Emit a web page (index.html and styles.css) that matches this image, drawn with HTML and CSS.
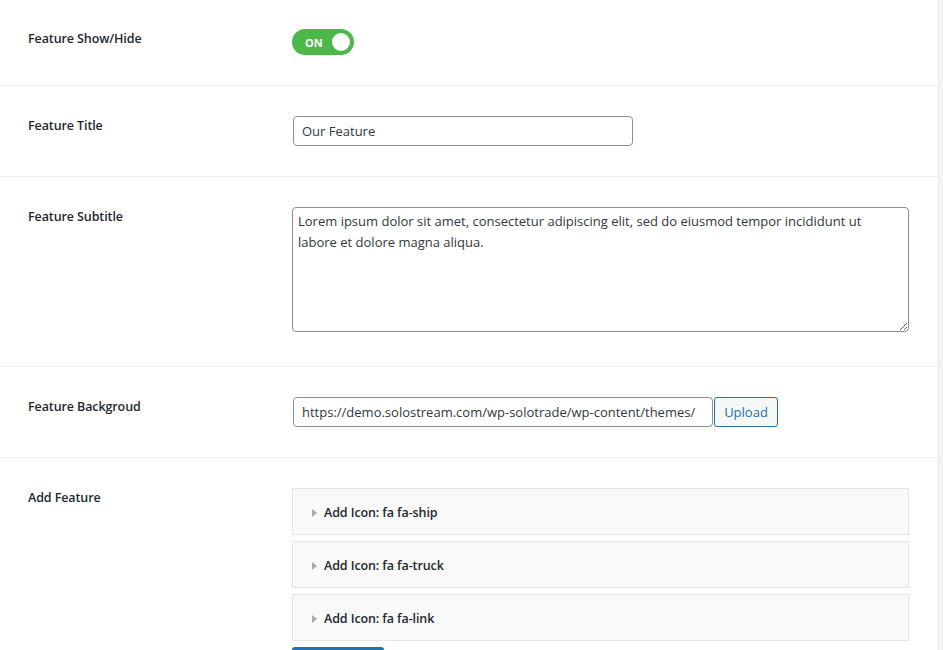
FILE: index.html
```html
<!DOCTYPE html>
<html lang="en">
<head>
    <meta charset="UTF-8">
    <title>Feature Settings</title>
    <link rel="stylesheet" href="styles.css">
</head>
<body>
    <div class="page">
        <div class="settings">
            <div class="row">
                <div class="label">Feature Show/Hide</div>
                <div class="field">
                    <span class="switch"><span class="switch-text">ON</span><span class="knob"></span></span>
                </div>
            </div>
            <div class="row">
                <div class="label">Feature Title</div>
                <div class="field">
                    <input class="text-input title-input" type="text" value="Our Feature">
                </div>
            </div>
            <div class="row">
                <div class="label">Feature Subtitle</div>
                <div class="field">
                    <textarea class="text-area">Lorem ipsum dolor sit amet, consectetur adipiscing elit, sed do eiusmod tempor incididunt ut labore et dolore magna aliqua.</textarea>
                </div>
            </div>
            <div class="row">
                <div class="label">Feature Backgroud</div>
                <div class="field upload-field">
                    <input class="text-input url-input" type="text" value="https://demo.solostream.com/wp-solotrade/wp-content/themes/">
                    <button class="upload-btn">Upload</button>
                </div>
            </div>
            <div class="row last">
                <div class="label">Add Feature</div>
                <div class="field">
                    <div class="repeater">
                        <div class="repeater-item"><span class="caret"></span>Add Icon: fa fa-ship</div>
                        <div class="repeater-item"><span class="caret"></span>Add Icon: fa fa-truck</div>
                        <div class="repeater-item"><span class="caret"></span>Add Icon: fa fa-link</div>
                    </div>
                    <button class="add-btn" aria-label="Add Feature"></button>
                </div>
            </div>
        </div>
        <div class="scroll-strip"></div>
    </div>
</body>
</html>
```

FILE: styles.css
```css
body {
    margin: 0;
    font-family: 'Open Sans', sans-serif;
    font-size: 13px;
    color: #23282d;
    background: #fff;
    overflow: hidden;
}

.page {
    display: flex;
    height: 650px;
}

.settings {
    flex: 1;
}

.scroll-strip {
    width: 4px;
    background: #f3f3f3;
    border-left: 1px solid #ececec;
}

.row {
    display: grid;
    grid-template-columns: 292px 1fr;
    padding: 30px 0 30px;
    border-bottom: 1px solid #eeeeee;
}

.row:first-child {
    padding-top: 29px;
    padding-bottom: 30px;
}

.row.last {
    border-bottom: none;
}

.label {
    padding-left: 28px;
    padding-top: 1px;
    font-weight: 550;
    font-size: 12.5px;
    letter-spacing: -0.1px;
    color: #23282d;
}

.switch {
    display: flex;
    align-items: center;
    justify-content: space-between;
    width: 62px;
    height: 26px;
    border-radius: 13px;
    background: #4db84a;
    box-sizing: border-box;
    padding: 0 4px 0 13px;
}

.switch-text {
    color: #fff;
    font-weight: 700;
    font-size: 11px;
}

.knob {
    width: 18px;
    height: 18px;
    border-radius: 50%;
    background: #fff;
}

.text-input {
    font-family: 'Open Sans', sans-serif;
    font-size: 13px;
    color: #32373c;
    height: 30px;
    box-sizing: border-box;
    border: 1px solid #8c8f94;
    border-radius: 4px;
    padding: 0 8px;
    margin: 0;
    outline: none;
}

.title-input {
    width: 340px;
    margin-left: 1px;
}

.text-area {
    display: block;
    width: 617px;
    height: 125px;
    box-sizing: border-box;
    border: 1px solid #8c8f94;
    border-radius: 4px;
    padding: 3px 5px;
    font-family: 'Open Sans', sans-serif;
    font-size: 13px;
    line-height: 21px;
    color: #32373c;
    resize: both;
    margin-bottom: 4px;
}

.upload-field {
    display: flex;
    gap: 1px;
    padding-left: 1px;
}

.url-input {
    width: 420px;
    font-size: 13px;
}

.upload-btn {
    height: 30px;
    width: 64px;
    box-sizing: border-box;
    border: 1px solid #2271b1;
    border-radius: 3px;
    background: #f6f7f7;
    color: #2271b1;
    font-family: 'Open Sans', sans-serif;
    font-size: 13px;
    padding: 0;
}

.repeater {
    display: flex;
    flex-direction: column;
    gap: 6px;
    width: 617px;
}

.repeater-item {
    display: flex;
    align-items: center;
    height: 47px;
    box-sizing: border-box;
    border: 1px solid #e5e5e5;
    background: #f9f9f9;
    padding-left: 19px;
    padding-top: 2px;
    font-weight: 550;
    font-size: 12.5px;
    letter-spacing: -0.1px;
    color: #23282d;
}

.caret {
    width: 0;
    height: 0;
    border-top: 4px solid transparent;
    border-bottom: 4px solid transparent;
    border-left: 5px solid #a7aaad;
    margin-right: 7px;
}

.add-btn {
    display: block;
    margin-top: 6px;
    width: 92px;
    height: 30px;
    border: none;
    border-radius: 3px;
    background: #2271b1;
}
```
